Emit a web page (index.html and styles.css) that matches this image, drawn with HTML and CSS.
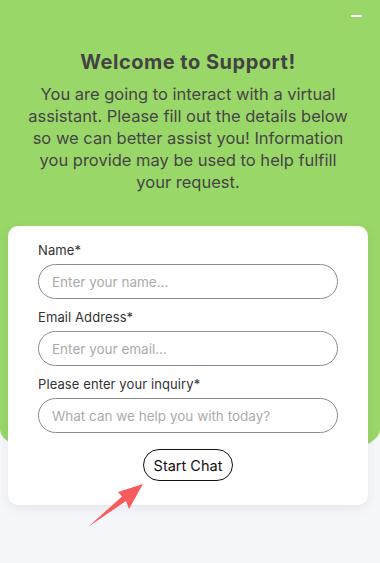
FILE: index.html
```html
<!DOCTYPE html>
<html lang="en">
<head>
<meta charset="utf-8">
<title>Support</title>
<link rel="stylesheet" href="styles.css">
</head>
<body>
<div class="page">
  <button class="minimize" aria-label="Minimize"></button>
  <header class="hero">
    <h1 class="title">Welcome to Support!</h1>
    <p class="intro">You are going to interact with a virtual assistant. Please fill out the details below so we can better assist you! Information you provide may be used to help fulfill your request.</p>
  </header>
  <form class="card">
    <label class="field">
      <span class="label">Name*</span>
      <input class="input" type="text" placeholder="Enter your name...">
    </label>
    <label class="field">
      <span class="label">Email Address*</span>
      <input class="input" type="email" placeholder="Enter your email...">
    </label>
    <label class="field">
      <span class="label">Please enter your inquiry*</span>
      <input class="input" type="text" placeholder="What can we help you with today?">
    </label>
    <div class="actions">
      <button class="start" type="button">Start Chat</button>
    </div>
  </form>
  <svg class="pointer" width="60" height="48" viewBox="0 0 60 48" aria-hidden="true">
    <polygon points="1,45 35,14.5 31,10 56,2 42,27 39,19" fill="#f75b5b"/>
  </svg>
</div>
</body>
</html>
```
FILE: styles.css
```css
html, body {
  margin: 0;
  padding: 0;
  background: #f6f7fb;
}
body {
  font-family: "Inter", "Noto Sans", sans-serif;
  color: #444;
  width: 380px;
  height: 563px;
  overflow: hidden;
}
.page {
  position: relative;
  width: 376px;
  padding-top: 50px;
}
.page::before {
  content: "";
  position: absolute;
  left: 0;
  top: 0;
  width: 380px;
  height: 470px;
  background: #9ad769;
  border-radius: 0 0 50% 50% / 0 0 40px 40px;
}
.minimize {
  position: absolute;
  top: 15px;
  left: 351px;
  width: 11px;
  height: 2px;
  padding: 0;
  border: 0;
  background: #fff;
  z-index: 2;
}
.hero {
  position: relative;
  text-align: center;
}
.title {
  margin: 0;
  font-size: 20px;
  line-height: 24px;
  font-weight: 700;
  letter-spacing: 0.5px;
  color: #434343;
}
.intro {
  margin: 9px auto 0;
  width: 326px;
  font-size: 16.5px;
  line-height: 22px;
  color: #454545;
}
.card {
  position: relative;
  margin: 33px 0 0 8px;
  width: 360px;
  box-sizing: border-box;
  padding: 15px 30px 24px;
  background: #fff;
  border-radius: 10px;
  box-shadow: 0 4px 12px rgba(40, 50, 80, 0.08);
  display: flex;
  flex-direction: column;
  gap: 9px;
}
.field {
  display: flex;
  flex-direction: column;
  gap: 5px;
}
.label {
  font-size: 13px;
  line-height: 18px;
  color: #333;
  letter-spacing: 0.1px;
}
.input {
  height: 35px;
  box-sizing: border-box;
  border: 1px solid #8c8c8c;
  border-radius: 18px;
  padding: 0 13px;
  font-family: inherit;
  font-size: 13.5px;
  color: #333;
  background: #fff;
  outline: none;
}
.input::placeholder {
  color: #ababab;
}
.actions {
  display: flex;
  justify-content: center;
  padding-top: 7px;
}
.start {
  height: 32px;
  width: 90px;
  box-sizing: border-box;
  border: 1px solid #111;
  border-radius: 16px;
  background: #fff;
  font-family: inherit;
  font-size: 14.5px;
  color: #111;
  padding: 0;
}
.pointer {
  position: absolute;
  left: 87px;
  top: 482px;
}
```
